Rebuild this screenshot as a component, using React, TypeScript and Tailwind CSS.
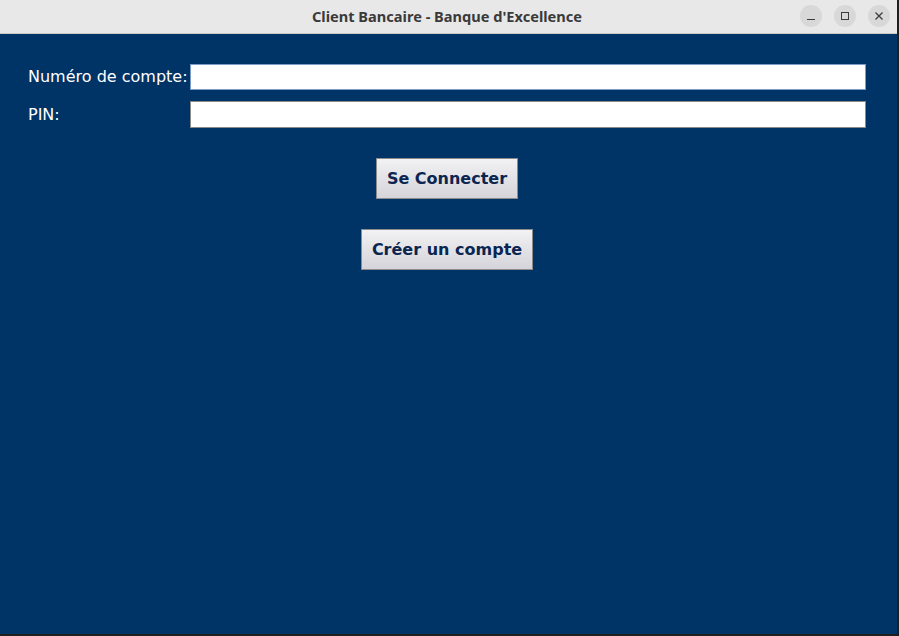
export default function App() {
	return (
		<div className="w-[899px] h-[636px] flex flex-col bg-[#1e1e1e] overflow-hidden">
			<div className="h-[34px] shrink-0 bg-[#e8e8e8] border-b border-[#c9c9c9] flex items-center relative mr-[2px]">
				<div className="flex-1 text-center pr-[3px] text-[14.6px] font-bold text-[#3a3a3a] font-['Noto_Sans',sans-serif]">
					Client Bancaire - Banque d'Excellence
				</div>
				<div className="absolute right-[7px] top-[5px] flex gap-[12px]">
					<WinButton>
						<div className="w-[8px] h-[1px] bg-[#3c3c3c] mt-[6px]" />
					</WinButton>
					<WinButton>
						<div className="w-[8px] h-[8px] border border-[#3c3c3c]" />
					</WinButton>
					<WinButton>
						<svg width="10" height="10" viewBox="0 0 10 10">
							<path d="M1.5 1.5L8.5 8.5M8.5 1.5L1.5 8.5" stroke="#3c3c3c" strokeWidth="1.3" />
						</svg>
					</WinButton>
				</div>
			</div>
			<div className="flex-1 bg-[#003366] mr-[2px] mb-[2px] pt-[30px] pl-[28px] pr-[31px] font-['DejaVu_Sans',sans-serif]">
				<div className="flex items-center h-[26px]">
					<label className="w-[162px] text-[16px] text-white whitespace-nowrap">Numéro de compte:</label>
					<input className="flex-1 h-[26px] bg-white border border-[#7a9cc6] outline-none" />
				</div>
				<div className="flex items-center h-[27px] mt-[11px]">
					<label className="w-[162px] text-[16px] text-white">PIN:</label>
					<input type="password" className="flex-1 h-[27px] bg-white border border-[#8a8a8a] outline-none" />
				</div>
				<div className="flex flex-col items-center mt-[30px] gap-[30px]">
					<AppButton>Se Connecter</AppButton>
					<AppButton>Créer un compte</AppButton>
				</div>
			</div>
		</div>
	);
}

function WinButton({ children }: { children: React.ReactNode }) {
	return (
		<div className="w-[22px] h-[22px] rounded-full bg-[#d8d8d8] flex items-center justify-center">{children}</div>
	);
}

function AppButton({ children }: { children: React.ReactNode }) {
	return (
		<button className="h-[41px] px-[10px] border border-[#8c8c8c] bg-gradient-to-b from-[#f2f2f4] to-[#d4d4da] text-[#0a2550] text-[16px] font-bold">
			{children}
		</button>
	);
}
